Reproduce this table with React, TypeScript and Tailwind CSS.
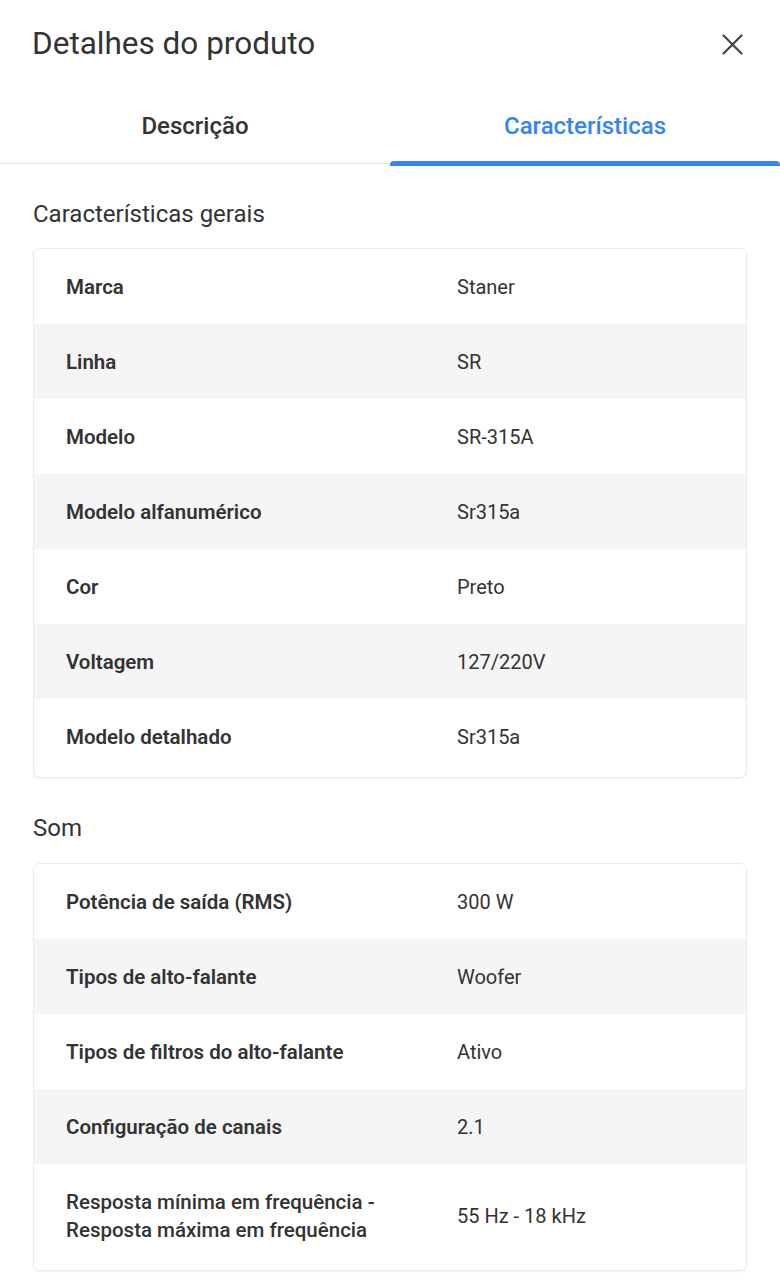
import React from "react";

type Row = { label: string; value: string; tall?: boolean };

const geral: Row[] = [
  { label: "Marca", value: "Staner" },
  { label: "Linha", value: "SR" },
  { label: "Modelo", value: "SR-315A" },
  { label: "Modelo alfanumérico", value: "Sr315a" },
  { label: "Cor", value: "Preto" },
  { label: "Voltagem", value: "127/220V" },
  { label: "Modelo detalhado", value: "Sr315a" },
];

const som: Row[] = [
  { label: "Potência de saída (RMS)", value: "300 W" },
  { label: "Tipos de alto-falante", value: "Woofer" },
  { label: "Tipos de filtros do alto-falante", value: "Ativo" },
  { label: "Configuração de canais", value: "2.1" },
  { label: "Resposta mínima em frequência - Resposta máxima em frequência", value: "55 Hz - 18 kHz", tall: true },
];

function Table({ rows }: { rows: Row[] }) {
  return (
    <div className="mx-[33px] pb-[3px] bg-white rounded-[7px] border border-[#ebebeb] overflow-hidden shadow-[0_1px_2px_rgba(0,0,0,0.06)]">
      {rows.map((r, i) => (
        <div
          key={i}
          className={`flex items-center ${r.tall ? "h-[103px]" : "h-[75px]"} ${i % 2 === 1 ? "bg-[#f5f5f5]" : "bg-white"}`}
        >
          <div className="w-[423px] pl-[32px] pr-4 text-[20.5px] leading-[28px] font-semibold text-[#333]">
            {r.tall ? (
              <>
                <div className="font-medium">Resposta mínima em frequência -</div>
                <div className="font-medium">Resposta máxima em frequência</div>
              </>
            ) : (
              r.label
            )}
          </div>
          <div className="flex-1 text-[20px] leading-[28px] text-[#333]">{r.value}</div>
        </div>
      ))}
    </div>
  );
}

export default function App() {
  return (
    <div className="w-[780px] min-h-[1280px] bg-white" style={{ fontFamily: "Roboto, 'Noto Sans', sans-serif" }}>
      <div className="flex items-center justify-between h-[88px] pl-[32px] pr-[37px]">
        <h1 className="text-[31.5px] text-[#333] font-normal">Detalhes do produto</h1>
        <svg width="21" height="21" viewBox="0 0 21 21" className="text-[#444]">
          <path d="M1.5 1.5 L19.5 19.5 M19.5 1.5 L1.5 19.5" stroke="currentColor" strokeWidth="2.2" strokeLinecap="round" />
        </svg>
      </div>
      <div className="relative flex h-[76px] border-b border-[#e5e5e5]">
        <div className="flex-1 flex items-center justify-center text-[24px] text-[#333] font-medium">Descrição</div>
        <div className="flex-1 flex items-center justify-center text-[24px] text-[#3483fa] font-medium relative">
          Características
          <div className="absolute left-0 right-0 bottom-[-3px] h-[5px] rounded-t-[4px] bg-[#3483fa]" />
        </div>
      </div>
      <div className="pt-[35px] pb-[19px] pl-[33px] text-[24px] text-[#333] font-normal leading-[30px]">Características gerais</div>
      <Table rows={geral} />
      <div className="pt-[35px] pb-[20px] pl-[33px] text-[24px] text-[#333] font-normal leading-[30px]">Som</div>
      <Table rows={som} />
    </div>
  );
}
